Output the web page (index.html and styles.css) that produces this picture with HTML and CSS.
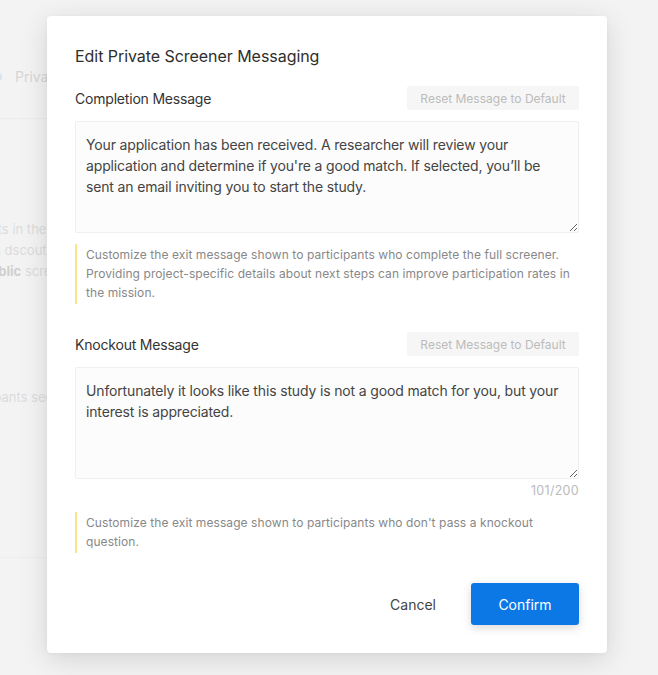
FILE: index.html
```html
<!DOCTYPE html>
<html lang="en">
<head>
<meta charset="utf-8">
<title>Edit Private Screener Messaging</title>
<link rel="stylesheet" href="styles.css">
</head>
<body>
<div class="app">
  <div class="app-header">
    <span class="app-dot"></span>
    <span class="app-tab">Priva</span>
  </div>
  <div class="app-body">
    <p class="app-line">Participants in the club</p>
    <p class="app-line">Share with dscout pals</p>
    <p class="app-line">Keep it <b>public</b> screen</p>
    <p class="app-line app-gap">All participants see</p>
  </div>
  <div class="app-footer"></div>
</div>

<div class="overlay">
  <div class="modal">
    <h1 class="modal-title">Edit Private Screener Messaging</h1>

    <div class="field">
      <div class="field-head">
        <span class="field-label">Completion Message</span>
        <button class="reset-btn" type="button">Reset Message to Default</button>
      </div>
      <textarea class="message">Your application has been received. A researcher will review your application and determine if you're a good match. If selected, you’ll be sent an email inviting you to start the study.</textarea>
      <div class="note">Customize the exit message shown to participants who complete the full screener. Providing project-specific details about next steps can improve participation rates in the mission.</div>
    </div>

    <div class="field field-second">
      <div class="field-head">
        <span class="field-label">Knockout Message</span>
        <button class="reset-btn" type="button">Reset Message to Default</button>
      </div>
      <textarea class="message">Unfortunately it looks like this study is not a good match for you, but your interest is appreciated.</textarea>
      <div class="counter">101/200</div>
      <div class="note">Customize the exit message shown to participants who don't pass a knockout question.</div>
    </div>

    <div class="modal-footer">
      <button class="btn-cancel" type="button">Cancel</button>
      <button class="btn-confirm" type="button">Confirm</button>
    </div>
  </div>
</div>
</body>
</html>
```
FILE: styles.css
```css
* { box-sizing: border-box; }

html, body {
  margin: 0;
  padding: 0;
  width: 658px;
  height: 675px;
  overflow: hidden;
}

body {
  background: #f3f3f3;
  font-family: Inter, "Noto Sans", sans-serif;
  color: #333;
  position: relative;
}

/* background application (faded, mostly hidden under the modal) */
.app {
  margin-left: -64px;
  width: 111px;
  height: 675px;
  overflow: hidden;
  white-space: nowrap;
  display: flex;
  flex-direction: column;
}

.app-header {
  height: 119px;
  flex: none;
  padding-top: 67px;
  padding-left: 58px;
  display: flex;
  align-items: flex-start;
  gap: 13px;
  border-bottom: 1px solid #ececec;
}

.app-dot {
  width: 8px;
  height: 8px;
  border-radius: 50%;
  background: #d7e4f2;
  margin-top: 6px;
  flex: none;
}

.app-tab {
  font-size: 14px;
  color: #d6d6d6;
  line-height: 20px;
}

.app-body {
  flex: 1;
  padding-top: 100px;
}

.app-line {
  margin: 0;
  font-size: 13px;
  line-height: 21px;
  color: #dcdcdc;
}

.app-line b { color: #cfcfcf; }

.app-gap { margin-top: 105px; }

.app-footer {
  height: 118px;
  flex: none;
  border-top: 1px solid #ededed;
}

/* modal */
.overlay {
  position: absolute;
  inset: 0;
  display: flex;
  justify-content: center;
  align-items: flex-start;
  padding-top: 16px;
  padding-right: 4px;
}

.modal {
  width: 560px;
  height: 637px;
  background: #fff;
  border-radius: 4px;
  box-shadow: 0 6px 28px rgba(0, 0, 0, 0.13), 0 1px 4px rgba(0, 0, 0, 0.04);
  padding: 30px 28px 28px;
  display: flex;
  flex-direction: column;
}

.modal-title {
  margin: 0;
  font-size: 16px;
  font-weight: 400;
  line-height: 21px;
  letter-spacing: -0.05px;
  color: #2e2e2e;
}

.field {
  margin-top: 19px;
  display: flex;
  flex-direction: column;
}

.field-second { margin-top: 28px; }

.field-head {
  display: flex;
  justify-content: space-between;
  align-items: center;
  height: 24px;
}

.field-label {
  font-size: 14px;
  letter-spacing: -0.2px;
  color: #333;
}

.reset-btn {
  height: 24px;
  border: none;
  border-radius: 2px;
  background: #f6f6f6;
  color: #bcbcbc;
  font-family: Inter, "Noto Sans", sans-serif;
  font-size: 12px;
  padding: 0 12px;
  width: 172px;
}

.message {
  display: block;
  width: 504px;
  height: 112px;
  margin-top: 11px;
  padding: 12px 14px 12px 10px;
  border: 1px solid #efefef;
  border-radius: 2px;
  background: #fcfcfc;
  font-family: Inter, "Noto Sans", sans-serif;
  font-size: 14px;
  letter-spacing: -0.15px;
  line-height: 21px;
  color: #444;
  resize: vertical;
  outline: none;
}

.note {
  margin-top: 11px;
  border-left: 2px solid #fde28f;
  padding: 1px 0 2px 9px;
  font-size: 12px;
  letter-spacing: 0.08px;
  line-height: 19px;
  color: #888;
}

.counter {
  text-align: right;
  font-size: 12.5px;
  letter-spacing: 0.3px;
  line-height: 20px;
  color: #bbb;
  margin-top: 2px;
}

.modal-footer {
  margin-top: auto;
  display: flex;
  justify-content: flex-end;
  align-items: center;
  gap: 14px;
}

.btn-cancel {
  border: none;
  background: transparent;
  font-family: Inter, "Noto Sans", sans-serif;
  font-size: 14px;
  color: #444;
  height: 42px;
  padding: 0 21px;
}

.btn-confirm {
  width: 108px;
  height: 42px;
  border: none;
  border-radius: 3px;
  background: #0b78e6;
  color: #fff;
  font-family: Inter, "Noto Sans", sans-serif;
  font-size: 14px;
  box-shadow: 0 3px 10px rgba(0, 0, 0, 0.15);
}
```
